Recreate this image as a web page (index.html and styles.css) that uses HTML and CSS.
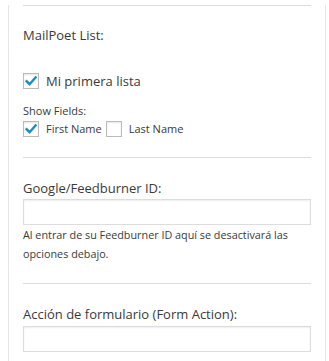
FILE: index.html
```html
<!DOCTYPE html>
<html lang="es">
<head>
<meta charset="utf-8">
<title>Widget</title>
<link rel="stylesheet" href="styles.css">
</head>
<body>
<div class="widget">
  <hr class="sep sep-first">
  <p class="label label-list">MailPoet List:</p>
  <label class="check check-list">
    <span class="box"><svg viewBox="0 0 16 16" width="16" height="16"><path d="M3.6 8.2 L6.6 11.2 L12.6 4.4" fill="none" stroke="#1e8cbe" stroke-width="2.4" stroke-linecap="square"/></svg></span>
    <span class="check-text">Mi primera lista</span>
  </label>
  <p class="small">Show Fields:</p>
  <div class="fields">
    <label class="check check-small">
      <span class="box"><svg viewBox="0 0 16 16" width="16" height="16"><path d="M3.6 8.2 L6.6 11.2 L12.6 4.4" fill="none" stroke="#1e8cbe" stroke-width="2.4" stroke-linecap="square"/></svg></span>
      <span class="check-text">First Name</span>
    </label>
    <label class="check check-small">
      <span class="box"></span>
      <span class="check-text">Last Name</span>
    </label>
  </div>
  <hr class="sep">
  <p class="label">Google/Feedburner ID:</p>
  <input class="field" type="text">
  <p class="help">Al entrar de su Feedburner ID aquí se desactivará las opciones debajo.</p>
  <hr class="sep sep-after-help">
  <p class="label">Acción de formulario (Form Action):</p>
  <input class="field field-last" type="text">
</div>
</body>
</html>
```

FILE: styles.css
```css
html, body {
  margin: 0;
  padding: 0;
  background: #fff;
}

body {
  font-family: "Open Sans", "Noto Sans", sans-serif;
  color: #3a3a3a;
}

.widget {
  width: 288px;
  margin-left: 8px;
  padding: 0 14px 10px;
  border-left: 1px solid #e5e5e5;
  border-right: 1px solid #e5e5e5;
}

.sep {
  display: block;
  height: 0;
  margin: 20px 0 0;
  border: 0;
  border-top: 1px solid #dcdcdc;
}

.sep-first {
  margin-top: 5px;
}

.label {
  margin: 21px 0 0;
  font-size: 13px;
  line-height: 18px;
}

.label-list {
  margin-top: 20px;
}

.check {
  display: flex;
  align-items: center;
  height: 16px;
}

.check-list {
  margin-top: 29px;
  font-size: 13px;
  line-height: 16px;
}

.check-list .check-text {
  margin-left: 7px;
}

.box {
  box-sizing: border-box;
  width: 16px;
  height: 16px;
  border: 1px solid #bbb;
  background: #fff;
  box-shadow: inset 0 1px 2px rgba(0, 0, 0, 0.1);
  position: relative;
  flex: none;
}

.box svg {
  position: absolute;
  left: -1px;
  top: -1px;
}

.small {
  margin: 15px 0 0;
  font-size: 11px;
  line-height: 14px;
}

.fields {
  display: flex;
  margin-top: 3px;
  gap: 4px;
}

.check-small {
  font-size: 11px;
  line-height: 16px;
}

.check-small .check-text {
  margin-left: 7px;
}

.field {
  display: block;
  box-sizing: border-box;
  width: 288px;
  height: 26px;
  margin: 2px 0 0;
  padding: 0;
  border: 1px solid #ddd;
  background: #fff;
  box-shadow: inset 0 1px 2px rgba(0, 0, 0, 0.07);
  outline: none;
}

.field-last {
  margin-top: 3px;
}

.help {
  margin: 0;
  font-size: 10.8px;
  line-height: 19px;
}

.sep-after-help {
  margin-top: 20px;
}
```
